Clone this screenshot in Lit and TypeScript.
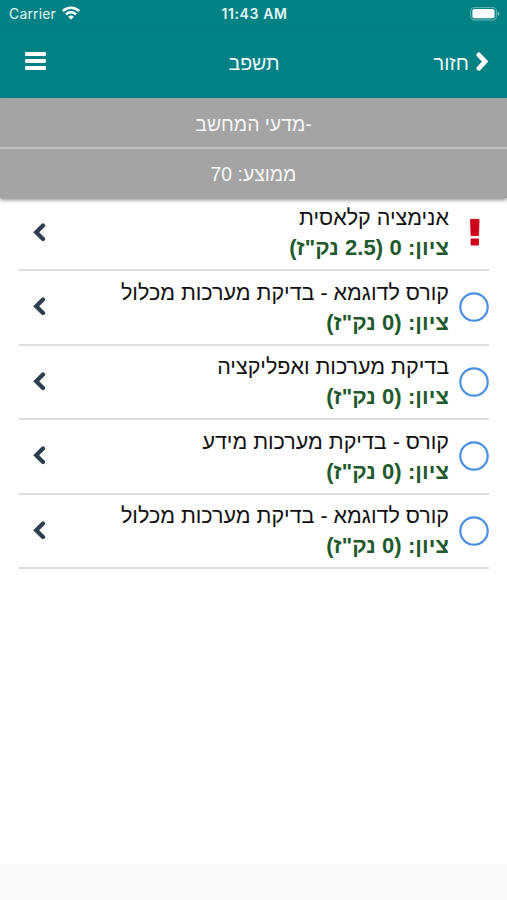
import { LitElement, html, css, svg } from "lit";
import { customElement, property } from "lit/decorators.js";

interface Course {
  name: string;
  grade: string;
  alert?: boolean;
}

const courses: Course[] = [
  { name: "אנימציה קלאסית", grade: 'ציון: 0 (2.5 נק"ז)', alert: true },
  { name: "קורס לדוגמא - בדיקת מערכות מכלול", grade: 'ציון: (0 נק"ז)' },
  { name: "בדיקת מערכות ואפליקציה", grade: 'ציון: (0 נק"ז)' },
  { name: "קורס - בדיקת מערכות מידע", grade: 'ציון: (0 נק"ז)' },
  { name: "קורס לדוגמא - בדיקת מערכות מכלול", grade: 'ציון: (0 נק"ז)' },
];

@customElement("status-bar")
class StatusBar extends LitElement {
  static styles = css`
    :host {
      display: grid;
      grid-template-columns: 1fr auto 1fr;
      align-items: center;
      height: 26px;
      box-sizing: border-box;
      padding: 2px 7px 0 9px;
      border-bottom: 1px solid #007b7c;
      color: #e4f5f4;
      font: 14px/20px Inter, sans-serif;
    }
    .left { display: flex; align-items: center; gap: 6px; letter-spacing: 0.15px; }
    .left svg { margin-top: -2px; }
    .time { font-weight: 600; font-size: 14px; letter-spacing: 0.6px; }
    .right { display: flex; justify-content: flex-end; }
    svg { display: block; }
  `;
  render() {
    return html`
      <div class="left">
        <span>Carrier</span>
        <svg width="18" height="14" viewBox="0 0 18 14" fill="none" stroke="#fff" stroke-width="2.5">
          <path d="M.9 5.2a11.4 11.4 0 0 1 16.2 0M4 8.4a7 7 0 0 1 10 0" />
          <path d="M9 13.8 6.2 10.8a3.9 3.9 0 0 1 5.6 0Z" fill="#fff" stroke="none" />
        </svg>
      </div>
      <div class="time">11:43 AM</div>
      <div class="right">
        <svg width="30" height="14" viewBox="0 0 30 14">
          <rect x=".6" y=".5" width="25.8" height="12.4" rx="3.6" fill="none" stroke="#5fb0b1" stroke-width="1.1" />
          <rect x="2.4" y="2.1" width="22.2" height="9.2" rx="2" fill="#fff" />
          <path d="M27.7 4.5q1.8.8 1.8 2.2t-1.8 2.2Z" fill="#79bfc0" />
        </svg>
      </div>
    `;
  }
}

@customElement("nav-bar")
class NavBar extends LitElement {
  static styles = css`
    :host {
      display: grid;
      grid-template-columns: 1fr auto 1fr;
      align-items: center;
      height: 72px;
      box-sizing: border-box;
      padding: 2px 18px 0 25px;
      color: #eefafa;
      font: 20px/26px "Liberation Sans", sans-serif;
    }
    .back { display: flex; align-items: center; gap: 7px; }
    .back svg { margin-bottom: 3px; }
    .title { font-size: 19.6px; margin: 0 3px 0 -3px; }
    .menu { justify-self: end; margin-bottom: 4px; }
    svg { display: block; }
  `;
  render() {
    return html`
      <div class="back">
        <svg width="13" height="20" viewBox="0 0 13 20" fill="none" stroke="#fff" stroke-width="4.6" stroke-linecap="round">
          <path d="M2.8 2.8 9.2 9.6 2.8 16.4" />
        </svg>
        <span>חזור</span>
      </div>
      <div class="title">תשפב</div>
      <svg class="menu" width="21" height="18" viewBox="0 0 21 18" fill="#fff">
        <rect width="21" height="4" rx="1.2" />
        <rect y="7" width="21" height="4" rx="1.2" />
        <rect y="14" width="21" height="4" rx="1.2" />
      </svg>
    `;
  }
}

@customElement("course-row")
class CourseRow extends LitElement {
  @property({ attribute: false }) course!: Course;

  static styles = css`
    :host {
      display: flex;
      height: 74.5px;
      box-sizing: border-box;
      border-bottom: 2px solid #dcdcdc;
      align-items: center;
    }
    .mark { width: 30px; display: flex; justify-content: center; }
    .text { flex: 1; margin-right: 10px; padding-top: 0.4px; }
    .name { font-size: 21.5px; line-height: 29px; color: #111; white-space: nowrap; }
    .grade { font-size: 22px; line-height: 29px; letter-spacing: 0.08px; font-weight: 700; color: #1f5a2d; }
    .arrow { margin-left: 14px; }
    svg { display: block; }
  `;
  render() {
    const mark = this.course.alert
      ? svg`<path d="M11.6 1.4h8.4l-.5 16.2h-7.4Z" fill="#d0021b" stroke="#d0021b" stroke-linejoin="round" />
            <rect x="11.6" y="20.4" width="8.4" height="7" rx="1" fill="#d0021b" />`
      : svg`<circle cx="15" cy="15" r="13.7" fill="none" stroke="#4a90e2" stroke-width="2.2" />`;
    return html`
      <div class="mark"><svg width="30" height="30" viewBox="0 0 30 30">${mark}</svg></div>
      <div class="text">
        <div class="name">${this.course.name}</div>
        <div class="grade">${this.course.grade}</div>
      </div>
      <svg class="arrow" width="13" height="20" viewBox="0 0 13 20" fill="none" stroke="#2c3e50" stroke-width="4.2" stroke-linecap="round">
        <path d="M10 2.4 3.2 9.2 10 16" />
      </svg>
    `;
  }
}

@customElement("app-root")
class AppRoot extends LitElement {
  static styles = css`
    :host {
      display: flex;
      flex-direction: column;
      height: 900px;
      overflow: hidden;
      background: #fff;
      direction: rtl;
      font-family: "Liberation Sans", sans-serif;
    }
    .top { background: #008284; height: 98px; flex: none; }
    status-bar { direction: ltr; }
    .summary {
      flex: none;
      background: #a4a4a4;
      color: #f6f6f6;
      font-size: 19.4px;
      text-align: center;
      box-shadow: 0 2px 4px rgba(0, 0, 0, 0.45);
    }
    .line { height: 49px; line-height: 52px; box-sizing: border-box; }
    .line + .line { height: 51px; line-height: 50px; border-top: 2px solid #c4c4c4; }
    .list { flex: 1; padding: 0 18px 0 19px; margin-top: -1.4px; }
    .footer { height: 36px; background: #fafafa; flex: none; }
  `;
  render() {
    return html`
      <div class="top">
        <status-bar></status-bar>
        <nav-bar></nav-bar>
      </div>
      <div class="summary">
        <div class="line">-מדעי המחשב</div>
        <div class="line">ממוצע: 70</div>
      </div>
      <div class="list">
        ${courses.map((c) => html`<course-row .course=${c}></course-row>`)}
      </div>
      <div class="footer"></div>
    `;
  }
}
